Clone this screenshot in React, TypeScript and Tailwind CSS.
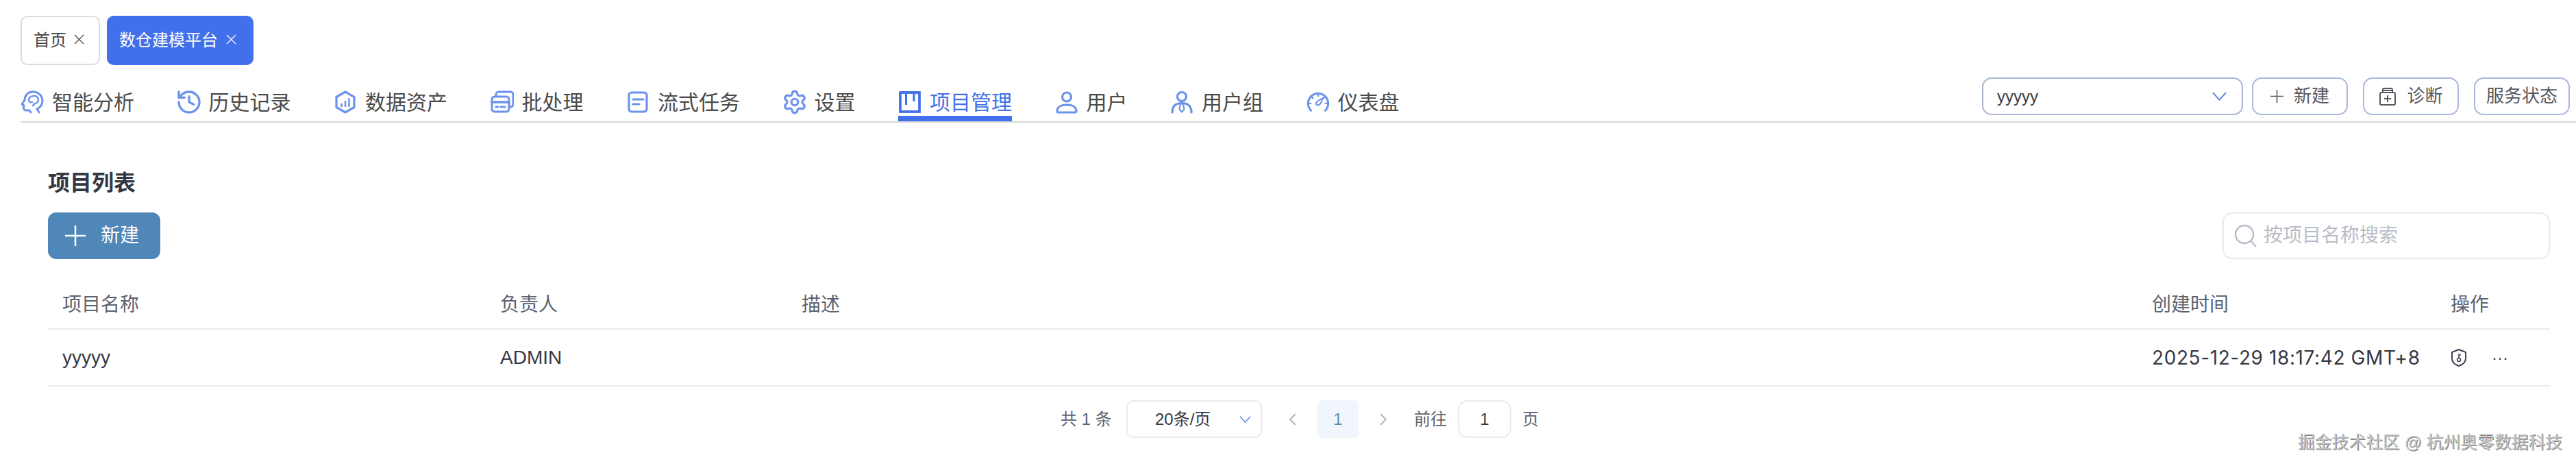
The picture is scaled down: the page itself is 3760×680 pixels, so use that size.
import { History, Settings } from 'lucide-react'
import type { ReactNode } from 'react'

const font = "font-['Liberation_Sans','Noto_Sans_CJK_SC',sans-serif]"

function Head() {
  return (
    <svg viewBox="0 0 34 34" className="h-[34px] w-[34px]" fill="none" stroke="currentColor" strokeWidth="3" strokeLinecap="round" strokeLinejoin="round">
      <path d="M27 32l-3-5c4-2 8-6 8-12C32 8 26 2 18 2 10 2 6 8 6 14l-4 6 3 2c-1 3-1 6 2 7h6l2 3" />
      <path d="M12 14c0-4 4-6 8-6 4 0 6 3 6 6 0 3-3 5-5 5l-3 3M12 14c0 2 2 4 5 3" strokeWidth="2.500" />
    </svg>
  )
}

function Hex() {
  return (
    <svg viewBox="0 0 34 34" className="h-[34px] w-[34px]" fill="none" stroke="currentColor" strokeLinecap="round" strokeLinejoin="round">
      <path d="M17 2l13 7.500v15L17 32 4 24.500v-15z" strokeWidth="3.200" />
      <path d="M11.500 23v-3M17 23v-7M22.500 23V12" strokeWidth="2.500" />
    </svg>
  )
}

function Batch() {
  return (
    <svg viewBox="0 0 34 34" className="h-[34px] w-[34px]" fill="none" stroke="currentColor" strokeLinecap="round" strokeLinejoin="round">
      <path d="M8 8V6a4 4 0 0 1 4-4h17a4 4 0 0 1 4 4v14a4 4 0 0 1-4 4" strokeWidth="3" />
      <rect x="2" y="9" width="25" height="22" rx="4" strokeWidth="3" />
      <path d="M2 17h25" strokeWidth="3.500" />
      <path d="M8 24h3M15 24h6" strokeWidth="3" />
    </svg>
  )
}

function Doc() {
  return (
    <svg viewBox="0 0 34 34" className="h-[34px] w-[34px]" fill="none" stroke="currentColor" strokeLinecap="round" strokeLinejoin="round" strokeWidth="3.200">
      <rect x="4" y="3" width="26" height="28" rx="4" />
      <path d="M10 13h15M10 20h9" />
    </svg>
  )
}

function Kanban() {
  return (
    <svg viewBox="0 0 34 34" className="h-[34px] w-[34px]" fill="none" stroke="currentColor" strokeWidth="3.800">
      <rect x="3" y="3" width="28" height="28" />
      <path d="M11.500 5v16M23 5v11" strokeWidth="3" />
    </svg>
  )
}

function User() {
  return (
    <svg viewBox="0 0 34 34" className="h-[34px] w-[34px]" fill="none" stroke="currentColor" strokeWidth="3.200" strokeLinejoin="round">
      <circle cx="17" cy="9.500" r="6.500" />
      <path d="M5 32a2 2 0 0 1-2-2c0-6 6-9 14-9s14 3 14 9a2 2 0 0 1-2 2z" />
    </svg>
  )
}

function UserTie() {
  return (
    <svg viewBox="0 0 34 34" className="h-[34px] w-[34px]" fill="none" stroke="currentColor" strokeWidth="3.200" strokeLinecap="round" strokeLinejoin="round">
      <circle cx="17" cy="9" r="6.500" />
      <path d="M3 32c0-9 5-13.500 14-13.500S31 23 31 32" />
      <path d="M15 19.500l-1.500 8 3.500 4 3.500-4-1.500-8z" strokeWidth="2.200" />
    </svg>
  )
}

function Gauge() {
  return (
    <svg viewBox="0 0 36 34" className="h-[34px] w-[36px]" fill="none" stroke="currentColor" strokeWidth="3.200" strokeLinecap="round" strokeLinejoin="round">
      <path d="M7 30A15.500 15.500 0 1 1 29 30" />
      <path d="M18 3.500v4M2.500 19h4M33.500 19h-4M7 8l3 3M29 8l-3 3" strokeWidth="2.500" />
      <path d="M25 11c-1 4-3 9-6 10.500-2 1-5-1-4-3.500 1-2 6-5 10-7z" strokeWidth="2.200" />
    </svg>
  )
}

function Diagnose() {
  return (
    <svg viewBox="0 0 26 28" className="h-[28px] w-[26px]" fill="none" stroke="#555860" strokeWidth="2">
      <rect x="2" y="8" width="22" height="18" rx="2" />
      <path d="M6 8V4a2 2 0 0 1 2-2h10a2 2 0 0 1 2 2v4M6 5h14M13 12v10M8 17h10" />
    </svg>
  )
}

function ShieldKey() {
  return (
    <svg viewBox="0 0 24 28" className="h-[28px] w-[24px]" fill="none" stroke="#3c4250" strokeWidth="2" strokeLinejoin="round">
      <path d="M12 2l10 4v9c0 6-4 9-10 11C6 24 2 21 2 15V6z" />
      <circle cx="12" cy="17" r="2.500" strokeWidth="1.500" />
      <path d="M12 14.500V8M12 10h3" strokeWidth="1.500" />
    </svg>
  )
}

function PlusMark({ className }: { className: string }) {
  return (
    <svg viewBox="0 0 24 24" className={className} fill="none" stroke="currentColor" strokeWidth="2">
      <path d="M12 0v24M0 12h24" />
    </svg>
  )
}

function CloseMark() {
  return (
    <svg viewBox="0 0 15 15" className="-mt-[3px] h-[15px] w-[15px]" fill="none" stroke="currentColor" strokeWidth="1.200">
      <path d="M1 1l13 13M14 1L1 14" />
    </svg>
  )
}

function Caret({ className }: { className: string }) {
  return (
    <svg viewBox="0 0 20 12" className={className} fill="none" stroke="#5b87e8" strokeWidth="1.800">
      <path d="M1 1l9 10 9-10" />
    </svg>
  )
}

function Search() {
  return (
    <svg viewBox="0 0 34 34" className="h-[34px] w-[34px]" fill="none" stroke="#b8bcc8" strokeWidth="2.400">
      <circle cx="15" cy="15" r="13" />
      <path d="M24 24l8 9" />
    </svg>
  )
}

function Pager({ dir }: { dir: 'prev' | 'next' }) {
  return (
    <svg viewBox="0 0 11 18" className="h-[18px] w-[11px]" fill="none" stroke="#adb0b6" strokeWidth="1.800">
      <path d={dir === 'prev' ? 'M10 1L2 9l8 8' : 'M1 1l8 8-8 8'} />
    </svg>
  )
}

const navItems: { label: string; icon: ReactNode; active?: boolean }[] = [
  { label: '智能分析', icon: <Head /> },
  { label: '历史记录', icon: <History size={40} strokeWidth={2} className="shrink-0" /> },
  { label: '数据资产', icon: <Hex /> },
  { label: '批处理', icon: <Batch /> },
  { label: '流式任务', icon: <Doc /> },
  { label: '设置', icon: <Settings size={38} strokeWidth={2} className="shrink-0" /> },
  { label: '项目管理', icon: <Kanban />, active: true },
  { label: '用户', icon: <User /> },
  { label: '用户组', icon: <UserTie /> },
  { label: '仪表盘', icon: <Gauge /> },
]

function OutlineButton({ children }: { children: ReactNode }) {
  return (
    <button className="flex h-[55px] w-[140px] items-center justify-center gap-[15px] rounded-[14px] border-2 border-[#a8b8dc] text-[26px] text-[#555860]">
      {children}
    </button>
  )
}

export default function App() {
  return (
    <div className={`relative h-[680px] w-[3760px] overflow-hidden bg-white ${font}`}>
      {/* tabs */}
      <div className="flex gap-[10px] pl-[30px] pt-[23px]">
        <div className="flex h-[72px] w-[116px] items-center gap-[11px] rounded-[10px] border-2 border-[#dcdcdc] pl-[17px] text-[24px] text-[#444]">
          首页
          <CloseMark />
        </div>
        <div className="flex h-[72px] w-[214px] items-center gap-[12px] rounded-[10px] bg-[#4270ea] pl-[18px] text-[24px] text-white">
          数仓建模平台
          <CloseMark />
        </div>
      </div>

      {/* nav */}
      <div className="ml-[30px] mt-[18px] flex h-[66px] items-start justify-between border-b-2 border-[#d8d8d8] pr-[9px]">
        <div className="flex gap-[62.500px]">
          {navItems.map((item) => (
            <div
              key={item.label}
              className={`flex h-[64px] items-center gap-[12px] border-b-[8px] pt-[16px] text-[30px] ${
                item.active ? 'border-[#4270ea] text-[#4270ea]' : 'border-transparent text-[#4a4a4a]'
              }`}
            >
              <span className={`flex w-[34px] justify-center ${item.active ? 'text-[#4270ea]' : 'text-[#6b93ee]'}`}>{item.icon}</span>
              {item.label}
            </div>
          ))}
        </div>
        <div className="flex items-start gap-[22px]">
          <div className="mr-[-9px] flex h-[55px] w-[381px] items-center justify-between rounded-[14px] border-2 border-[#aab4d4] pl-[20px] pr-[22px] text-[24px] text-[#3a3d46]">
            yyyyy
            <Caret className="h-[13px] w-[21px]" />
          </div>
          <OutlineButton>
            <PlusMark className="h-[19px] w-[19px]" />
            新建
          </OutlineButton>
          <OutlineButton>
            <Diagnose />
            诊断
          </OutlineButton>
          <OutlineButton>服务状态</OutlineButton>
        </div>
      </div>

      {/* content */}
      <div className="pl-[70px] pr-[38px]">
        <h1 className="mt-[66px] text-[32px] font-semibold leading-[44px] text-[#333743]">项目列表</h1>
        <div className="mt-[21px] flex items-center justify-between">
          <button className="flex h-[68px] w-[164px] items-center gap-[22px] rounded-[12px] bg-[#4f87b8] pl-[25px] text-[28px] text-white">
            <PlusMark className="h-[30px] w-[30px]" />
            新建
          </button>
          <div className="flex h-[68px] w-[478px] items-center gap-[9px] rounded-[14px] border-2 border-[#e8eaee] pl-[15px] text-[28px] text-[#b8bcc8]">
            <Search />
            按项目名称搜索
          </div>
        </div>

        <div className="mt-[33px] flex h-[70px] items-center border-b-2 border-[#ececee] pl-[21px] text-[28px] text-[#5c6270]">
          <div className="w-[639px]">项目名称</div>
          <div className="w-[440px]">负责人</div>
          <div className="w-[1971px]">描述</div>
          <div className="w-[436px]">创建时间</div>
          <div>操作</div>
        </div>
        <div className="flex h-[83px] items-center border-b-2 border-[#ececee] pl-[21px] text-[28px] text-[#353945]">
          <div className="w-[639px]">yyyyy</div>
          <div className="w-[440px]">ADMIN</div>
          <div className="w-[1971px]" />
          <div className="w-[436px] font-['Inter',sans-serif] tracking-[0.600px]">2025-12-29 18:17:42 GMT+8</div>
          <div className="flex items-center gap-[36px]">
            <ShieldKey />
            <span className="text-[24px] leading-none text-[#3c4250]">···</span>
          </div>
        </div>

        {/* pagination */}
        <div className="mt-[20px] flex items-center pl-[1478px] text-[24px] text-[#5c6270]">
          <span className="w-[96px]">共 1 条</span>
          <div className="flex h-[55px] w-[198px] items-center justify-between rounded-[10px] border-2 border-[#e8eaee] pl-[40px] pr-[14px] text-[#353945]">
            20条/页
            <Caret className="h-[10px] w-[17px]" />
          </div>
          <span className="ml-[39px] flex"><Pager dir="prev" /></span>
          <div className="ml-[31px] flex h-[55px] w-[60px] items-center justify-center rounded-[6px] bg-[#f0f6fc] text-[#5b8fb8]">1</div>
          <span className="ml-[31px] flex"><Pager dir="next" /></span>
          <span className="ml-[39px]">前往</span>
          <div className="ml-[16px] flex h-[55px] w-[78px] items-center justify-center rounded-[14px] border-2 border-[#e8eaee] text-[#353945]">1</div>
          <span className="ml-[16px]">页</span>
        </div>
      </div>

      {/* watermark */}
      <div className="absolute left-[3354px] top-[631px] text-[24.800px] leading-[30px] text-[#c4c4c4] [text-shadow:1px_1px_0_#808080,-1px_-1px_0_#fff]">
        掘金技术社区 @ 杭州奥零数据科技
      </div>
    </div>
  )
}
